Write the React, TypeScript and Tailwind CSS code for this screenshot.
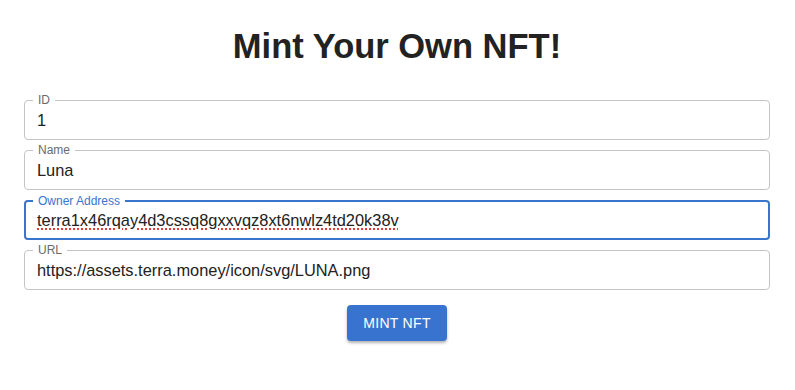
import React from "react";

function Field({ label, value, focused }: { label: string; value: string; focused?: boolean }) {
  return (
    <div
      className={
        "relative h-[40px] rounded-[4px] flex items-center " +
        (focused ? "border-2 border-[#3a75cc] px-[11px]" : "border border-[#c4c4c4] px-[12px]")
      }
    >
      <span
        className={
          "absolute top-[-8px] bg-white px-[5px] text-[12px] leading-[14px] " +
          (focused ? "text-[#3a75cc] left-[7px]" : "text-[#6b6b6b] left-[8px]")
        }
      >
        {label}
      </span>
      <span
        className={
          "text-[16.4px] text-[#222] whitespace-nowrap " +
          (focused ? "underline decoration-dotted decoration-[#e03c3c] decoration-2 underline-offset-[3px]" : "")
        }
      >
        {value}
      </span>
    </div>
  );
}

export default function App() {
  return (
    <div className="w-[795px] h-[390px] bg-white" style={{ fontFamily: '"Liberation Sans", Arial, sans-serif' }}>
      <div className="pt-[26px] pl-[24px] pr-[25px]">
        <h1 className="text-center text-[34.5px] leading-[40px] font-bold text-[#222]">Mint Your Own NFT!</h1>
        <div className="mt-[34px] flex flex-col gap-[10px]">
          <Field label="ID" value="1" />
          <Field label="Name" value="Luna" />
          <Field label="Owner Address" value="terra1x46rqay4d3cssq8gxxvqz8xt6nwlz4td20k38v" focused />
          <Field label="URL" value="https://assets.terra.money/icon/svg/LUNA.png" />
        </div>
        <div className="mt-[15px] flex justify-center">
          <button className="w-[100px] h-[36px] rounded-[4px] bg-[#3874cf] text-white text-[14px] tracking-[0.3px] shadow-[0_2px_3px_rgba(0,0,0,0.3)]">
            MINT NFT
          </button>
        </div>
      </div>
    </div>
  );
}
